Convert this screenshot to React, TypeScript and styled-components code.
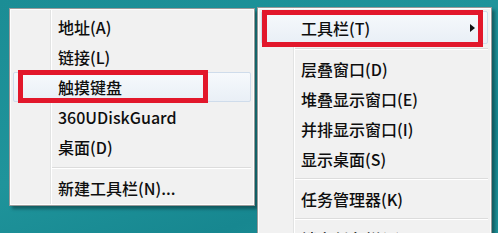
import React from 'react';
import styled, { createGlobalStyle } from 'styled-components';

const GlobalStyle = createGlobalStyle`
  html, body {
    margin: 0;
    padding: 0;
    width: 498px;
    height: 233px;
    overflow: hidden;
  }
  body {
    font-family: "Noto Sans CJK SC", "Noto Sans", sans-serif;
  }
`;

const Desktop = styled.div`
  width: 498px;
  height: 233px;
  box-sizing: border-box;
  padding: 7px 0 0 9px;
  display: flex;
  align-items: flex-start;
  gap: 2px;
  overflow: hidden;
  background: linear-gradient(160deg, #1b8d95 0%, #1f949b 45%, #178790 75%, #1e9299 100%);
`;

const Menu = styled.div<{ $width: number; $gutter: number; $top: number }>`
  position: relative;
  flex: none;
  width: ${({ $width }) => $width}px;
  margin-top: ${({ $top }) => $top}px;
  box-sizing: border-box;
  padding: 3px;
  background:
    linear-gradient(to right,
      transparent ${({ $gutter }) => $gutter - 1}px,
      #e2e3e3 ${({ $gutter }) => $gutter - 1}px,
      #e2e3e3 ${({ $gutter }) => $gutter}px,
      #ffffff ${({ $gutter }) => $gutter}px,
      #ffffff ${({ $gutter }) => $gutter + 1}px,
      transparent ${({ $gutter }) => $gutter + 1}px),
    #f1f1f1;
  border: 1px solid #9a9a9a;
  box-shadow: inset 0 0 0 1px #fdfdfd, 3px 3px 3px rgba(0, 0, 0, 0.35);
  color: #0e0e0e;
`;

const Item = styled.div<{ $indent: number; $height?: number; $active?: boolean }>`
  position: relative;
  height: ${({ $height }) => $height ?? 30}px;
  display: flex;
  align-items: center;
  box-sizing: border-box;
  padding-left: ${({ $indent }) => $indent}px;
  font-size: 16px;
  font-weight: 500;
  line-height: 1;
  white-space: nowrap;
  border: 1px solid ${({ $active }) => ($active ? '#cfdceb' : 'transparent')};
  border-radius: 2px;
  background: ${({ $active }) =>
    $active ? 'linear-gradient(to bottom, #f6f9fc, #e9eff6)' : 'transparent'};
`;

const Separator = styled.div<{ $gutter: number; $height: number }>`
  height: ${({ $height }) => $height}px;
  display: flex;
  align-items: center;
  padding-left: ${({ $gutter }) => $gutter - 2}px;

  &::after {
    content: '';
    flex: 1;
    height: 1px;
    background: #dcdcdc;
    border-bottom: 1px solid #ffffff;
  }
`;

const Arrow = styled.span`
  position: absolute;
  right: 12px;
  top: 50%;
  margin-top: -4px;
  width: 0;
  height: 0;
  border-top: 4px solid transparent;
  border-bottom: 4px solid transparent;
  border-left: 5px solid #111;
`;

const Marker = styled.div<{ $left: number; $top: number; $width: number; $height: number }>`
  position: absolute;
  left: ${({ $left }) => $left}px;
  top: ${({ $top }) => $top}px;
  width: ${({ $width }) => $width}px;
  height: ${({ $height }) => $height}px;
  box-sizing: border-box;
  border: 5px solid #e2172b;
  pointer-events: none;
`;

const leftItems = ['地址(A)', '链接(L)', '触摸键盘', '360UDiskGuard', '桌面(D)'];

const App: React.FC = () => {
  return (
    <>
      <GlobalStyle />
      <Desktop>
        <Menu $width={246} $gutter={41} $top={1}>
          {leftItems.map((label, i) => (
            <Item key={label} $indent={44} $active={i === 2}>
              {label}
            </Item>
          ))}
          <Separator $gutter={41} $height={12} />
          <Item $indent={44} $height={28}>新建工具栏(N)...</Item>
          <Marker $left={8} $top={61} $width={190} $height={33} />
        </Menu>

        <Menu $width={235} $gutter={36} $top={0}>
          <Item $indent={39} $height={33} $active>
            工具栏(T)
            <Arrow />
          </Item>
          <Separator $gutter={36} $height={10} />
          <Item $indent={39}>层叠窗口(D)</Item>
          <Item $indent={39}>堆叠显示窗口(E)</Item>
          <Item $indent={39}>并排显示窗口(I)</Item>
          <Item $indent={39}>显示桌面(S)</Item>
          <Separator $gutter={36} $height={10} />
          <Item $indent={39}>任务管理器(K)</Item>
          <Separator $gutter={36} $height={10} />
          <Item $indent={39}>锁定任务栏(L)</Item>
          <Marker $left={4} $top={2} $width={221} $height={37} />
        </Menu>
      </Desktop>
    </>
  );
};

export default App;
